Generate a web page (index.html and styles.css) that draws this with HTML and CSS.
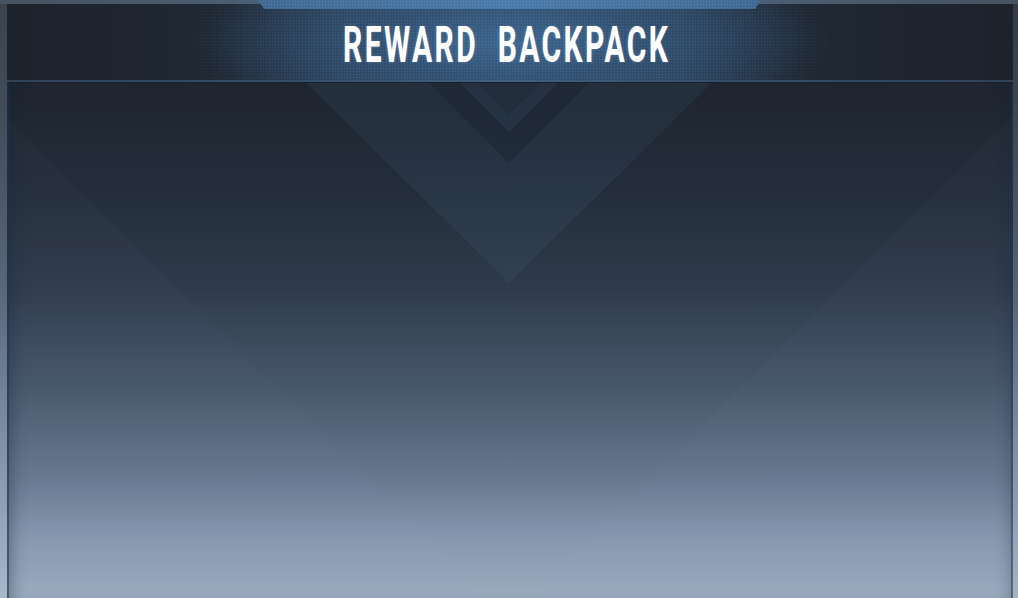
FILE: index.html
```html
<!DOCTYPE html>
<html lang="en">
<head>
<meta charset="utf-8">
<title>Reward Backpack</title>
<link rel="stylesheet" href="styles.css">
</head>
<body>
<div class="panel">
  <div class="topline"></div>
  <div class="tab"></div>
  <div class="frame">
    <div class="edge edge-left"></div>
    <div class="inner">
      <svg class="deco" viewBox="7 4 1006 594" preserveAspectRatio="none" aria-hidden="true">
        <polygon points="226,4 792,4 509,283" fill="#5a7ea6" fill-opacity="0.10"/>
        <polygon points="7,117 488,598 7,598" fill="#c8d6e6" fill-opacity="0.02"/>
        <polygon points="1013,115 530,598 1013,598" fill="#c8d6e6" fill-opacity="0.02"/>
        <polygon points="429,83 589,83 509,163" fill="#0e141c" fill-opacity="0.22"/>
        <polygon points="460,83 558,83 509,132" fill="#4a6a90" fill-opacity="0.16"/>
        <polygon points="477,83 541,83 509,115" fill="#0e141c" fill-opacity="0.18"/>
      </svg>
      <header class="header">
        <div class="header-dots"></div>
        <h1 class="title">REWARD&nbsp; BACKPACK</h1>
      </header>
      <div class="divider"></div>
      <div class="content"></div>
    </div>
    <div class="edge edge-right"></div>
  </div>
</div>
</body>
</html>
```

FILE: styles.css
```css
* { box-sizing: border-box; }
html, body { margin: 0; padding: 0; }
body {
  width: 1018px;
  height: 598px;
  overflow: hidden;
  background: #1e2530;
  font-family: Roboto, "Liberation Sans", sans-serif;
}
.panel {
  position: relative;
  width: 1018px;
  height: 598px;
  display: flex;
  flex-direction: column;
}
.topline {
  height: 4px;
  flex: none;
  background: linear-gradient(90deg, #46525f 0%, #4c6178 30%, #4f6a86 50%, #4c6178 70%, #46525f 100%);
}
.tab {
  position: absolute;
  left: 258px;
  top: 0;
  width: 503px;
  height: 9px;
  background:
    radial-gradient(circle, rgba(140,180,220,0.25) 0.7px, transparent 1.1px) 0 0 / 3px 3px,
    linear-gradient(90deg, #3f6890 0%, #4a7aa8 50%, #3f6890 100%);
  clip-path: polygon(0 0, 100% 0, calc(100% - 6px) 100%, 6px 100%);
  z-index: 3;
}
.frame {
  flex: 1;
  display: flex;
  min-height: 0;
}
.edge {
  flex: none;
}
.edge-left {
  width: 7px;
  background: linear-gradient(180deg, #3b434e 0%, #434d5a 20%, #5a697d 50%, #8093a9 75%, #a8b8ca 100%);
}
.edge-right {
  width: 5px;
  background: linear-gradient(180deg, #343b45 0%, #3d4654 20%, #56657a 50%, #7d90a6 75%, #a4b4c6 100%);
}
.inner {
  position: relative;
  flex: 1;
  display: flex;
  flex-direction: column;
  background: linear-gradient(180deg, #1d232c 0%, #1f2631 16%, #242e3b 32%, #2f3b4b 48%, #46566a 64%, #66798f 80%, #8698af 90%, #9aabbe 100%);
  box-shadow: inset 2px 0 0 rgba(30,50,80,0.55), inset 16px 0 14px -10px rgba(20,35,60,0.35), inset -2px 0 0 rgba(30,50,80,0.45), inset -14px 0 14px -10px rgba(20,35,60,0.3);
}
.deco {
  position: absolute;
  left: 0;
  top: 0;
  width: 100%;
  height: 100%;
  z-index: 0;
}
.header {
  position: relative;
  z-index: 1;
  height: 76px;
  flex: none;
  display: flex;
  align-items: center;
  justify-content: center;
  background:
    radial-gradient(ellipse 320px 75px at 50% 50%, rgba(64,104,146,0.85) 0%, rgba(52,86,122,0.6) 45%, rgba(40,64,92,0) 100%),
    linear-gradient(90deg, #1d232d 0%, #1f2732 20%, #2a3f57 33%, #30506f 50%, #2a3f57 67%, #1f2732 80%, #1d232d 100%);
  overflow: hidden;
}
.header-dots {
  position: absolute;
  inset: 0;
  background: radial-gradient(circle, rgba(120,160,200,0.22) 0.7px, transparent 1.1px) 0 0 / 3px 3px;
  -webkit-mask-image: linear-gradient(90deg, transparent 12%, #000 35%, #000 65%, transparent 88%);
  mask-image: linear-gradient(90deg, transparent 12%, #000 35%, #000 65%, transparent 88%);
}
.title {
  position: relative;
  margin: 0;
  font-family: Roboto, "Liberation Sans", sans-serif;
  font-weight: 700;
  font-size: 50px;
  line-height: 1;
  letter-spacing: 4px;
  color: #ffffff;
  white-space: nowrap;
  transform: translate(-3px, 3px) scaleX(0.6);
  text-shadow: 0 0 4px rgba(150,190,230,0.35);
}
.divider {
  position: relative;
  z-index: 1;
  height: 3px;
  flex: none;
  background: linear-gradient(90deg, #2e4259 0%, #36506c 30%, #3f6082 50%, #36506c 70%, #2e4259 100%);
  border-bottom: 1px solid #1a2029;
}
.content {
  flex: 1;
  position: relative;
  z-index: 1;
}
```
